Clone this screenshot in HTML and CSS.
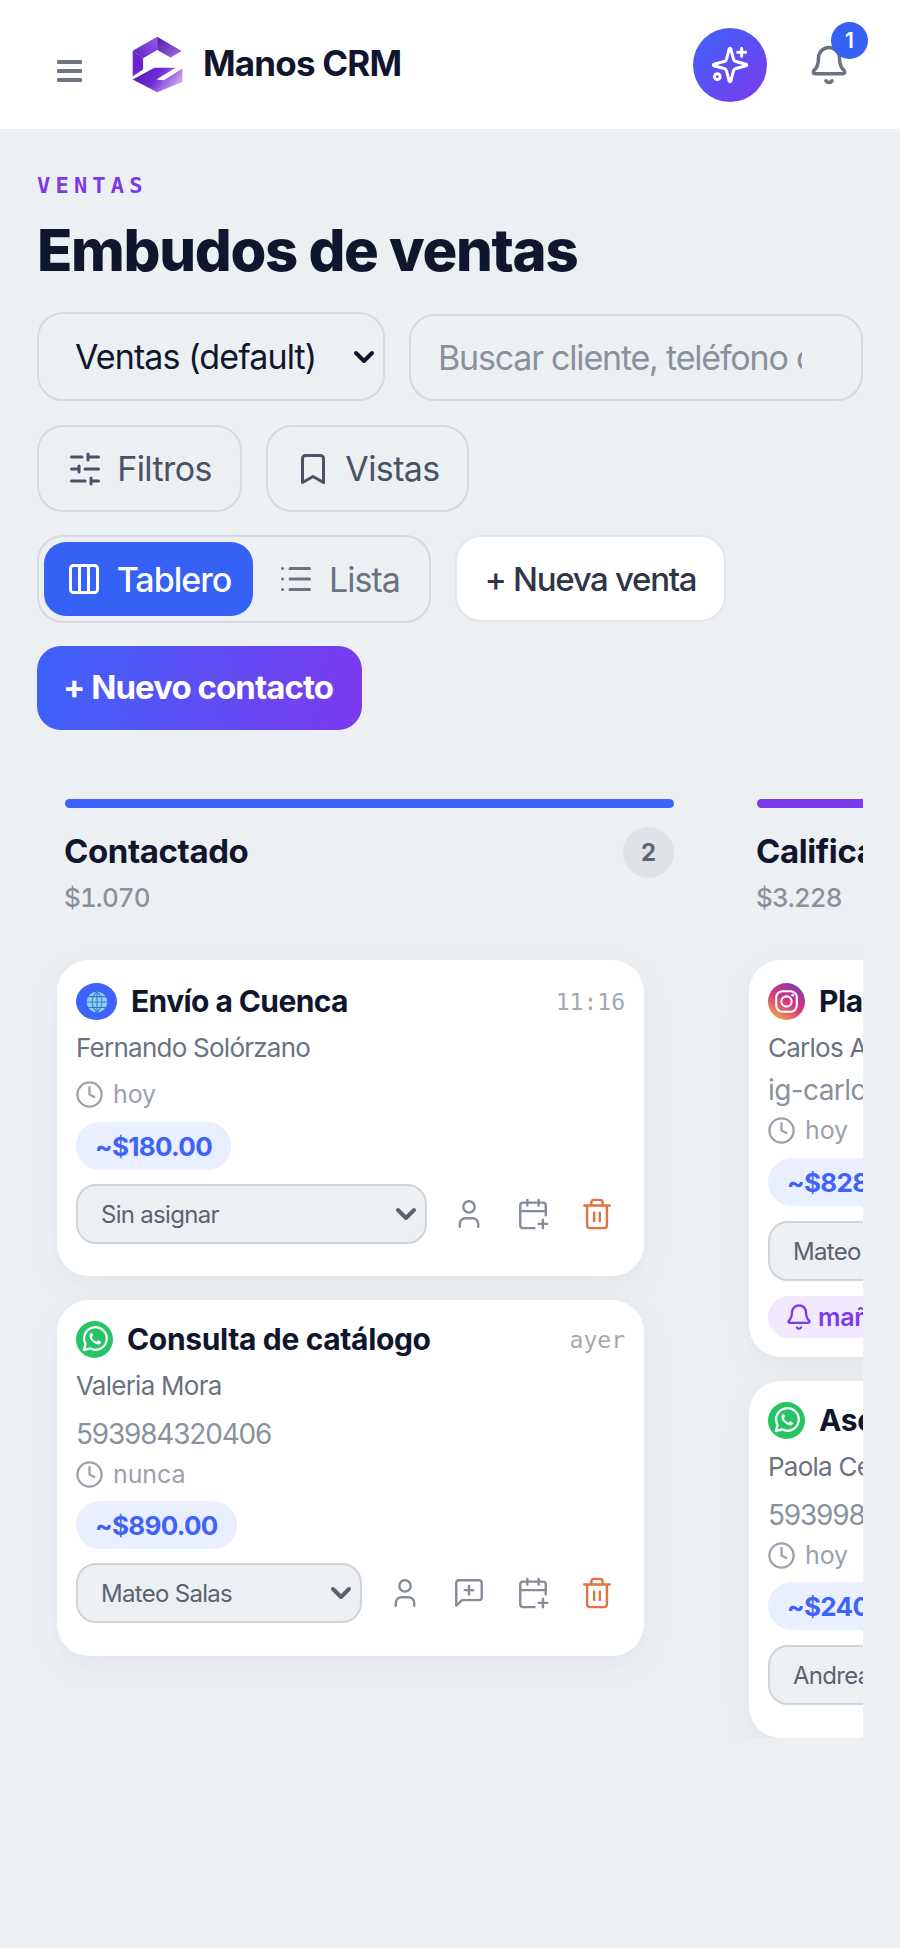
FILE: index.html
```html
<!DOCTYPE html>
<html lang="es">
<head>
<meta charset="utf-8">
<title>Manos CRM</title>
<link rel="stylesheet" href="styles.css">
</head>
<body>
<svg class="defs" width="0" height="0" aria-hidden="true">
  <defs>
    <linearGradient id="lg1" x1="0" y1="1" x2="1" y2="0"><stop offset="0" stop-color="#5a1fc4"/><stop offset="1" stop-color="#9a5be8"/></linearGradient>
    <linearGradient id="lg2" x1="0" y1="0" x2="1" y2="1"><stop offset="0" stop-color="#4a1aa8"/><stop offset="1" stop-color="#a76fe6"/></linearGradient>
    <linearGradient id="lg3" x1="0" y1="0" x2="1" y2="0.4"><stop offset="0" stop-color="#4a14b0"/><stop offset="0.55" stop-color="#6d2cd6"/><stop offset="1" stop-color="#c6a0ea"/></linearGradient>
    <linearGradient id="ig" x1="0.2" y1="1" x2="0.8" y2="0"><stop offset="0" stop-color="#f4a64e"/><stop offset="0.5" stop-color="#d5367f"/><stop offset="1" stop-color="#7b3bb5"/></linearGradient>
    <symbol id="i-clock" viewBox="0 0 24 24"><circle cx="12" cy="12" r="10"/><path d="M12 6v6l4 2"/></symbol>
    <symbol id="i-chev" viewBox="0 0 24 24"><path d="M4 8l8 8 8-8"/></symbol>
    <symbol id="i-user" viewBox="0 0 24 24"><circle cx="12" cy="7" r="4"/><path d="M5.500 21v-2a4 4 0 0 1 4-4h5a4 4 0 0 1 4 4v2"/></symbol>
    <symbol id="i-cal" viewBox="0 0 24 24"><path d="M21 13V6a2 2 0 0 0-2-2H5a2 2 0 0 0-2 2v14a2 2 0 0 0 2 2h8"/><path d="M3 10h18M8 2v4M16 2v4M19 16v6M16 19h6"/></symbol>
    <symbol id="i-trash" viewBox="0 0 24 24"><path d="M3 6h18M19 6v14a2 2 0 0 1-2 2H7a2 2 0 0 1-2-2V6M8 6V4a2 2 0 0 1 2-2h4a2 2 0 0 1 2 2v2M10 11v6M14 11v6"/></symbol>
    <symbol id="i-chat" viewBox="0 0 24 24"><path d="M21 15a2 2 0 0 1-2 2H7l-4 4V5a2 2 0 0 1 2-2h14a2 2 0 0 1 2 2z"/><path d="M12 7v6M9 10h6"/></symbol>
    <symbol id="i-wa" viewBox="0 0 36 36"><circle cx="18" cy="18" r="18" fill="#25c565"/><path d="M7.600 28.400l1.700-6.100a11 11 0 1 1 4.300 4.300z" fill="none" stroke="#fff" stroke-width="2.200" stroke-linejoin="round"/><path d="M14.600 11.800c-.5 0-1.400.7-1.500 2.200-.1 2.200 1.500 4.600 3.300 6.300 1.900 1.700 4.100 2.800 5.900 2.500 1.300-.2 2.200-1.300 2.200-2.300 0-.4-2.700-1.900-3.100-1.800-.5.1-1 1.400-1.600 1.400-1.400-.2-4-2.700-4.500-4.200 0-.6 1.200-1.100 1.300-1.600.1-.5-1.200-3-1.600-3z" fill="#fff"/></symbol>
  </defs>
</svg>

<header class="topbar">
  <div class="brand">
    <button class="menu" aria-label="Menú"><span></span><span></span><span></span></button>
    <svg class="logo" viewBox="395 108 152 170" aria-label="Logo">
      <path d="M397 152L470 110V150L428 174z" fill="url(#lg1)"/>
      <path d="M470 110L543 153L510 172L470 150z" fill="url(#lg2)"/>
      <path d="M397 152L428 174V208L397 228z" fill="#6a25cf"/>
      <path d="M397 238L462 203H525L468 238L490 240L545 205V245L470 276z" fill="url(#lg3)"/>
    </svg>
    <span class="brand-name">Manos CRM</span>
  </div>
  <div class="top-actions">
    <button class="spark" aria-label="Asistente">
      <svg viewBox="0 0 24 24"><path d="M9.937 15.500A2 2 0 0 0 8.500 14.063l-6.135-1.582a.5.5 0 0 1 0-.962L8.500 9.936A2 2 0 0 0 9.937 8.500l1.582-6.135a.5.5 0 0 1 .963 0L14.063 8.500A2 2 0 0 0 15.500 9.937l6.135 1.581a.5.5 0 0 1 0 .964L15.500 14.063a2 2 0 0 0-1.437 1.437l-1.582 6.135a.5.5 0 0 1-.963 0z"/><path d="M19 2v4.800M16.600 4.400h4.800"/><circle cx="4.400" cy="19" r="1.700"/></svg>
    </button>
    <div class="bell">
      <svg viewBox="0 0 24 24"><path d="M10.268 21a2 2 0 0 0 3.464 0"/><path d="M3.262 15.326A1 1 0 0 0 4 17h16a1 1 0 0 0 .74-1.673C19.410 13.956 18 12.499 18 8A6 6 0 0 0 6 8c0 4.499-1.411 5.956-2.738 7.326"/></svg>
      <span class="badge">1</span>
    </div>
  </div>
</header>

<main class="page">
  <p class="eyebrow">VENTAS</p>
  <h1 class="title">Embudos de ventas</h1>

  <div class="row row-search">
    <div class="sel sel-main">
      <select><option>Ventas (default)</option></select>
      <svg><use href="#i-chev"/></svg>
    </div>
    <input class="search" type="text" placeholder="Buscar cliente, teléfono o etiqueta">
  </div>

  <div class="row row-filter">
    <button class="ghost ghost-f"><svg viewBox="0 0 24 24"><path d="M21 4h-7M10 4H3M21 12h-9M8 12H3M21 20h-5M12 20H3M14 2v4M8 10v4M16 18v4"/></svg>Filtros</button>
    <button class="ghost ghost-v"><svg viewBox="0 0 24 24"><path d="M19 21l-7-4-7 4V5a2 2 0 0 1 2-2h10a2 2 0 0 1 2 2z"/></svg>Vistas</button>
  </div>

  <div class="row row-view">
    <div class="toggle">
      <button class="tg tg-on"><svg viewBox="0 0 24 24"><rect x="3" y="3" width="18" height="18" rx="2"/><path d="M9 3v18M15 3v18"/></svg>Tablero</button>
      <button class="tg tg-off"><svg viewBox="0 0 24 24"><path d="M8 5h13M8 12h13M8 19h13M3 5h.01M3 12h.01M3 19h.01"/></svg>Lista</button>
    </div>
    <button class="new-sale">+ Nueva venta</button>
  </div>

  <button class="new-contact">+ Nuevo contacto</button>

  <section class="board">
    <div class="col">
      <div class="bar bar-blue"></div>
      <div class="col-head">
        <div class="col-name">Contactado</div>
        <span class="count">2</span>
      </div>
      <div class="col-sum">$1.070</div>

      <article class="card card-plain">
        <div class="head">
          <span class="ch-web">
            <svg viewBox="0 0 24 24"><circle cx="12" cy="12" r="9.500" fill="#8fd3e8"/><path d="M12 2.500v19M2.500 12h19M4 7h16M4 17h16M12 2.500c-6 6-6 13 0 19M12 2.500c6 6 6 13 0 19" fill="none" stroke="#3d6fd8" stroke-width="1"/></svg>
          </span>
          <h3 class="name name-web">Envío a Cuenca</h3>
          <time class="when">11:16</time>
        </div>
        <div class="who">Fernando Solórzano</div>
        <div class="ago ago-a"><svg><use href="#i-clock"/></svg>hoy</div>
        <div class="pill pill-a">~$180.00</div>
        <div class="foot">
          <div class="sel sel-card sel-wide"><select><option>Sin asignar</option></select><svg><use href="#i-chev"/></svg></div>
          <div class="tools">
            <svg class="tool"><use href="#i-user"/></svg>
            <svg class="tool"><use href="#i-cal"/></svg>
            <svg class="tool tool-del"><use href="#i-trash"/></svg>
          </div>
        </div>
      </article>

      <article class="card card-wa">
        <div class="head">
          <svg class="ch-wa"><use href="#i-wa"/></svg>
          <h3 class="name">Consulta de catálogo</h3>
          <time class="when">ayer</time>
        </div>
        <div class="who">Valeria Mora</div>
        <div class="phone">593984320406</div>
        <div class="ago"><svg><use href="#i-clock"/></svg>nunca</div>
        <div class="pill">~$890.00</div>
        <div class="foot">
          <div class="sel sel-card sel-narrow"><select><option>Mateo Salas</option></select><svg><use href="#i-chev"/></svg></div>
          <div class="tools">
            <svg class="tool"><use href="#i-user"/></svg>
            <svg class="tool"><use href="#i-chat"/></svg>
            <svg class="tool"><use href="#i-cal"/></svg>
            <svg class="tool tool-del"><use href="#i-trash"/></svg>
          </div>
        </div>
      </article>
    </div>

    <div class="col">
      <div class="bar bar-violet"></div>
      <div class="col-head">
        <div class="col-name">Calificado</div>
        <span class="count">2</span>
      </div>
      <div class="col-sum">$3.228</div>

      <article class="card card-fit">
        <div class="head">
          <svg class="ch-ig" viewBox="0 0 36 36"><circle cx="18" cy="18" r="18" fill="url(#ig)"/><rect x="8" y="8" width="20" height="20" rx="6" fill="none" stroke="#fff" stroke-width="2"/><circle cx="18" cy="18" r="5" fill="none" stroke="#fff" stroke-width="2"/><circle cx="24" cy="12" r="1.300" fill="#fff"/></svg>
          <h3 class="name">Plan mensual</h3>
          <time class="when">11:02</time>
        </div>
        <div class="who">Carlos Andrade</div>
        <div class="phone phone-ig">ig-carlos.andrade</div>
        <div class="ago"><svg><use href="#i-clock"/></svg>hoy</div>
        <div class="pill pill-ig">~$828.00</div>
        <div class="sel sel-card sel-full"><select><option>Mateo Salas</option></select><svg><use href="#i-chev"/></svg></div>
        <div class="remind"><svg viewBox="0 0 24 24"><path d="M10.268 21a2 2 0 0 0 3.464 0"/><path d="M3.262 15.326A1 1 0 0 0 4 17h16a1 1 0 0 0 .74-1.673C19.410 13.956 18 12.499 18 8A6 6 0 0 0 6 8c0 4.499-1.411 5.956-2.738 7.326"/></svg>mañana</div>
      </article>

      <article class="card card-wa">
        <div class="head">
          <svg class="ch-wa"><use href="#i-wa"/></svg>
          <h3 class="name">Asesoría inicial</h3>
          <time class="when">hoy</time>
        </div>
        <div class="who">Paola Cevallos</div>
        <div class="phone">593998123456</div>
        <div class="ago"><svg><use href="#i-clock"/></svg>hoy</div>
        <div class="pill">~$240.00</div>
        <div class="sel sel-card sel-full"><select><option>Andrea Ruiz</option></select><svg><use href="#i-chev"/></svg></div>
      </article>
    </div>
  </section>
</main>
</body>
</html>
```

FILE: styles.css
```css
* { box-sizing: border-box; }
html, body { margin: 0; padding: 0; }
body {
  min-height: 1948px;
  background: #edf0f3;
  font-family: Inter, "Noto Sans", "Liberation Sans", sans-serif;
  color: #11162f;
}
button, select, input { font-family: inherit; margin: 0; }
button { cursor: pointer; }
.defs { position: absolute; }

/* top bar */
.topbar {
  height: 129px;
  background: #fff;
  display: flex;
  align-items: center;
  justify-content: space-between;
  padding: 0 50px 0 57px;
}
.brand { display: flex; align-items: center; }
.menu {
  width: 25px; padding: 0; border: 0; background: none;
  display: flex; flex-direction: column; gap: 5px; margin-top: 12px;
}
.menu span { display: block; height: 4px; background: #6f7683; border-radius: 1px; }
.logo { width: 51px; height: 57px; margin-left: 50px; margin-top: -1px; }
.brand-name {
  margin-left: 20px; margin-top: -4px;
  font-size: 35px; font-weight: 700; letter-spacing: -.8px; color: #11162f;
}
.top-actions { display: flex; align-items: center; }
.spark {
  width: 74px; height: 74px; padding: 0; border: 0; border-radius: 50%;
  background: linear-gradient(135deg, #3d63fb, #7c3aed);
  display: flex; align-items: center; justify-content: center;
}
.spark svg { width: 40px; height: 40px; fill: none; stroke: #fff; stroke-width: 1.800; stroke-linecap: round; stroke-linejoin: round; }
.bell { position: relative; width: 42px; height: 42px; margin-left: 41px; }
.bell svg { width: 42px; height: 42px; fill: none; stroke: #6b7280; stroke-width: 2; stroke-linecap: round; stroke-linejoin: round; }
.badge {
  position: absolute; top: -22px; left: 23px;
  width: 37px; height: 37px; border-radius: 50%;
  background: #3561f5; color: #fff;
  font-size: 21px; font-weight: 600;
  display: flex; align-items: center; justify-content: center;
}

/* page */
.page { padding: 0 37px; }
.eyebrow {
  margin: 0; padding-top: 43px; height: 68px;
  font-family: "DejaVu Sans Mono", "Liberation Mono", monospace;
  font-size: 22px; font-weight: 700; line-height: 28px;
  letter-spacing: 5.200px; color: #7c3aed;
}
.title {
  margin: 0; height: 115px; padding-top: 18px;
  font-size: 58px; line-height: 70px; font-weight: 800; letter-spacing: -1.300px; color: #11162f;
}
.row { display: flex; }
.row-search { gap: 24px; align-items: flex-end; }
.sel { position: relative; }
.sel select {
  appearance: none; display: block; width: 100%; height: 100%; background: transparent;
  outline: 0;
}
.sel svg { position: absolute; pointer-events: none; fill: none; stroke-linecap: round; stroke-linejoin: round; }
.sel-main { width: 348px; height: 89px; }
.sel-main select {
  border: 2.500px solid #d6d9de; border-radius: 26px;
  padding: 0 0 0 36px;
  font-size: 34px; letter-spacing: -.9px; color: #11162f;
}
.sel-main svg { right: 9px; top: 33px; width: 24px; height: 24px; stroke: #11162f; stroke-width: 4; }
.search {
  width: 454px; height: 87px;
  border: 2.500px solid #d6d9de; border-radius: 26px; background: transparent;
  padding: 0 59px 0 27px;
  font-size: 34px; letter-spacing: -1.200px; color: #11162f; outline: 0;
}
.search::placeholder { color: #8b919c; opacity: 1; }

.row-filter { gap: 24px; margin-top: 24px; }
.ghost {
  height: 87px; border: 2.500px solid #d6d9de; border-radius: 26px; background: transparent;
  display: flex; align-items: center; justify-content: center; gap: 14px;
  font-size: 34px; letter-spacing: -.6px; color: #4b5262; padding: 0;
}
.ghost-f { width: 205px; }
.ghost-v { width: 203px; }
.ghost svg, .tg svg { width: 36px; height: 36px; fill: none; stroke: currentColor; stroke-width: 2; stroke-linecap: round; stroke-linejoin: round; }

.row-view { gap: 24px; margin-top: 23px; align-items: stretch; }
.toggle {
  width: 394px; height: 88px; padding: 5px 4px;
  border: 2.500px solid #d6d9de; border-radius: 26px;
  display: flex;
}
.tg {
  border: 0; padding: 0; height: 74px; background: transparent;
  display: flex; align-items: center; justify-content: center; gap: 15px;
  font-size: 34px; letter-spacing: -1px;
}
.tg-on { width: 210px; margin-left: 1px; background: #3561f5; color: #fff; border-radius: 22px; font-weight: 500; }
.tg-off { width: 173px; color: #6b7280; }
.new-sale {
  width: 271px; height: 87px;
  background: #fff; border: 2.500px solid #e3e6ea; border-radius: 26px;
  font-size: 33px; font-weight: 500; letter-spacing: -1.300px; color: #2f3648; padding: 0;
}
.new-contact {
  display: block; width: 325px; height: 84px; margin-top: 23px;
  border: 0; border-radius: 24px;
  background: linear-gradient(100deg, #3d63fb, #7c3aed);
  color: #fff; font-size: 33px; font-weight: 700; padding: 0 3px 3px 0; letter-spacing: -.95px;
}

/* board */
.board {
  display: flex; gap: 55px; overflow: hidden;
  width: 826px; margin-top: 69px;
}
.col { flex: 0 0 637px; padding-left: 28px; }
.bar { height: 9px; border-radius: 5px; }
.bar-blue { background: #3d63fb; }
.bar-violet { background: #7c3aed; }
.col-head { display: flex; align-items: center; justify-content: space-between; height: 51px; margin-top: 19px; }
.col-name { font-size: 33px; font-weight: 700; letter-spacing: -.4px; color: #11162f; margin: -4px 0 0 -1px; }
.count {
  width: 51px; height: 51px; border-radius: 50%; background: #dfe2e7;
  display: flex; align-items: center; justify-content: center;
  font-size: 24px; font-weight: 700; color: #5d6472;
}
.col-sum {
  font-size: 26px; line-height: 36px; height: 36px; margin: 2px 0 0 -1px;
  color: #8b919c; font-weight: 500; font-variant-numeric: tabular-nums; letter-spacing: -.9px;
}

.card {
  width: 587px; margin: 24px 0 0 -8px; padding: 23px 19px 33px;
  background: #fff; border-radius: 32px;
  box-shadow: 0 10px 30px rgba(30, 40, 70, .06);
}
.col-sum + .card { margin-top: 44px; }
.card-plain { padding-bottom: 32px; }
.card-fit { padding-bottom: 19px; }
.card-wa { padding-top: 21px; padding-bottom: 33px; }
.head { display: flex; align-items: center; height: 37px; }
.ch-web {
  flex: none; width: 41px; height: 37px; border-radius: 50%; background: #3d63fb;
  display: flex; align-items: center; justify-content: center;
}
.ch-web svg { width: 26px; height: 26px; }
.ch-wa, .ch-ig { flex: none; width: 37px; height: 37px; }
.name {
  margin: 0 0 0 14px; flex: 1; white-space: nowrap;
  font-size: 30px; line-height: 37px; font-weight: 700; letter-spacing: -.35px; color: #11162f;
}
.name-web { letter-spacing: -.6px; }
.when {
  font-family: "DejaVu Sans Mono", "Liberation Mono", monospace;
  font-size: 23px; color: #a3a8b1;
}
.who { height: 36px; line-height: 36px; margin-top: 10px; font-size: 26px; letter-spacing: -.75px; color: #6b7280; white-space: nowrap; }
.phone { height: 40px; line-height: 40px; margin-top: 10px; font-size: 28px; letter-spacing: -1.200px; color: #8b919c; white-space: nowrap; }
.phone-ig { margin-top: 4px; letter-spacing: -.6px; }
.ago { display: flex; align-items: center; gap: 9px; height: 40px; font-size: 25px; letter-spacing: -.1px; color: #9ca1ab; }
.ago svg { width: 29px; height: 29px; margin-left: -1px; fill: none; stroke: #9ca1ab; stroke-width: 1.900; stroke-linecap: round; stroke-linejoin: round; }
.ago-a { margin-top: 8px; }
.pill {
  width: max-content; height: 48px; margin-top: 7px; padding: 0 19px;
  background: #e9effe; border-radius: 24px;
  display: flex; align-items: center;
  font-size: 26px; font-weight: 700; letter-spacing: -.7px; color: #3d63fb;
  white-space: nowrap;
}
.pill-a { margin-top: 8px; }
.foot { display: flex; align-items: center; margin-top: 14px; }
.sel-card { height: 60px; }
.sel-card select {
  border: 2.500px solid #d0d3d8; border-radius: 20px; background: #edf0f3;
  padding: 0 0 0 23px; font-size: 24px; letter-spacing: -.7px; color: #5b6270;
}
.sel-card svg { right: 9px; top: 18px; width: 24px; height: 24px; stroke: #5b6270; stroke-width: 4; }
.sel-wide { width: 351px; }
.sel-narrow { width: 286px; }
.sel-full { width: 549px; margin-top: 15px; }
.tools { display: flex; margin-left: auto; gap: 28px; padding-right: 10px; align-items: center; }
.tool { width: 34px; height: 34px; margin: 1px; fill: none; stroke: #868c98; stroke-width: 1.700; stroke-linecap: round; stroke-linejoin: round; }
.tool-del { stroke: #e0733f; }
.pill-ig { margin-top: 8px; }
.remind {
  width: max-content; height: 42px; margin-top: 15px; padding: 0 20px 0 17px;
  background: #f1e9fd; border-radius: 21px;
  display: flex; align-items: center; gap: 5px;
  font-size: 25px; font-weight: 600; letter-spacing: -.3px; color: #7c3aed;
}
.remind svg { width: 28px; height: 28px; fill: none; stroke: #7c3aed; stroke-width: 2; stroke-linecap: round; stroke-linejoin: round; }
```
